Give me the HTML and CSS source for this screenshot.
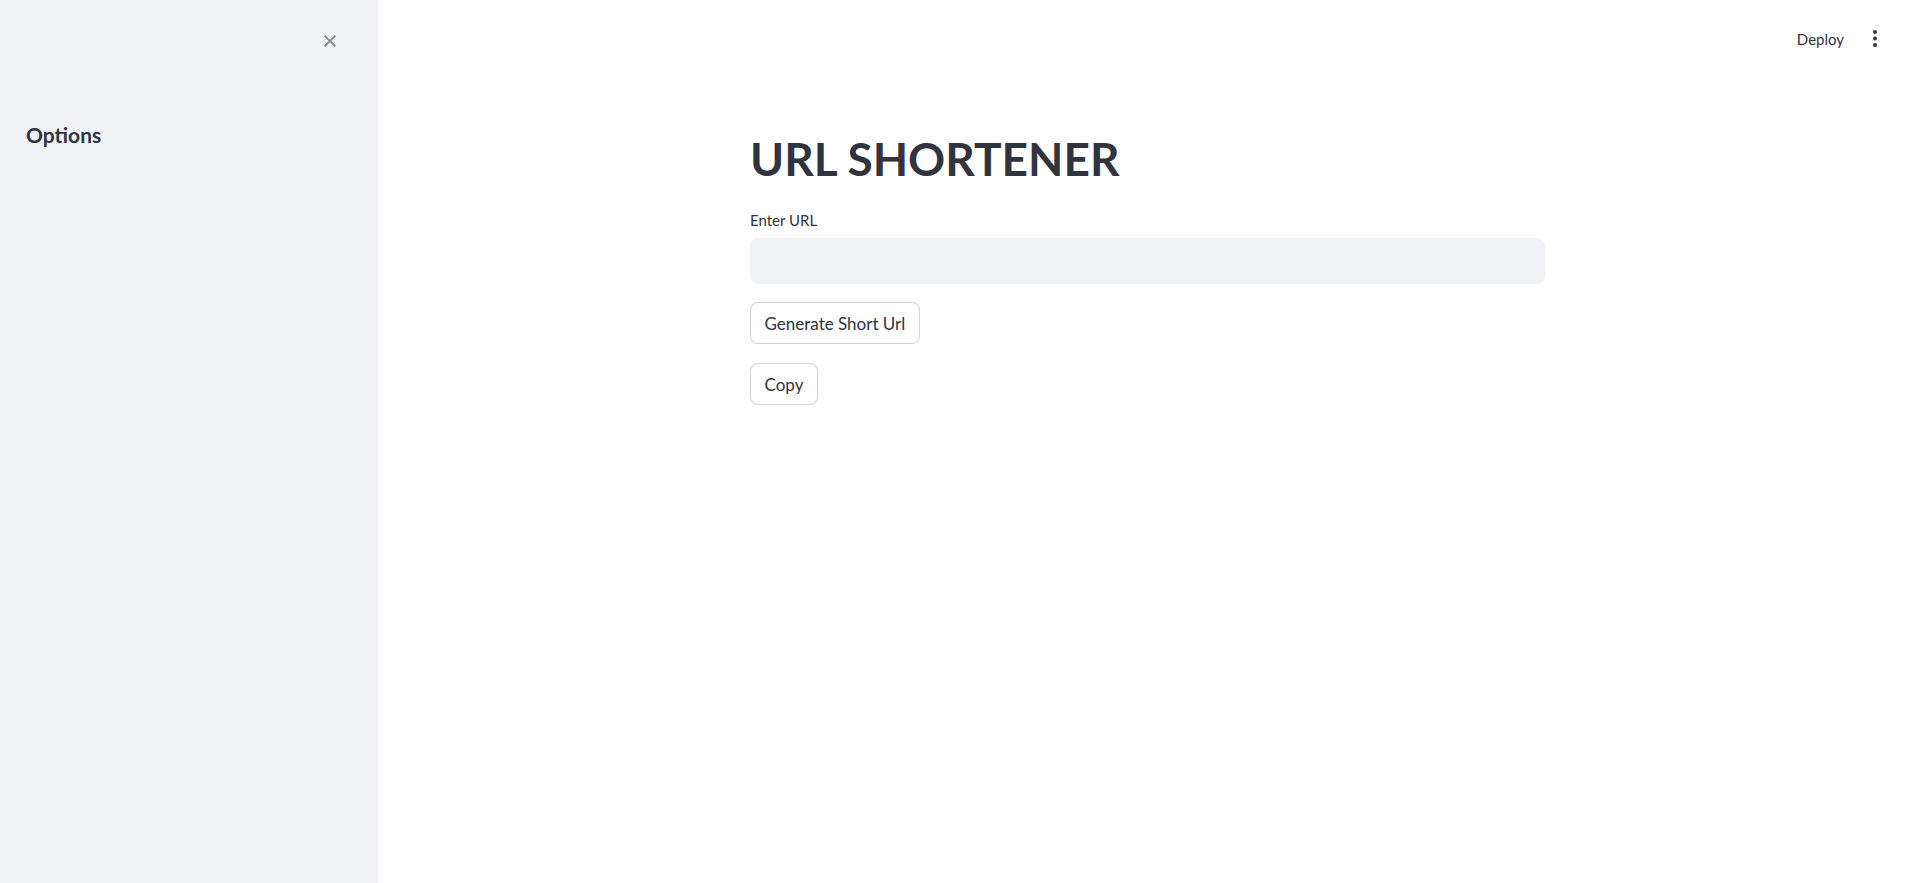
FILE: index.html
```html
<!DOCTYPE html>
<html lang="en">
<head>
<meta charset="utf-8">
<title>URL Shortener</title>
<link rel="stylesheet" href="styles.css">
</head>
<body>
<div class="app">
  <aside class="sidebar">
    <div class="sidebar-top">
      <button class="close-btn" aria-label="Close sidebar">
        <svg width="12" height="12" viewBox="0 0 12 12"><path d="M0.6 0.6 L11.4 11.4 M11.4 0.6 L0.6 11.4" stroke="currentColor" stroke-width="1.7" fill="none"/></svg>
      </button>
    </div>
    <h2 class="sidebar-title">Options</h2>
  </aside>
  <main class="main">
    <header class="topbar">
      <span class="deploy">Deploy</span>
      <span class="menu" aria-label="Main menu">
        <svg width="4" height="17" viewBox="0 0 4 17"><circle cx="2" cy="2" r="2" fill="#31333f"/><circle cx="2" cy="8.5" r="2" fill="#31333f"/><circle cx="2" cy="15" r="2" fill="#31333f"/></svg>
      </span>
    </header>
    <section class="content">
      <h1 class="title">URL SHORTENER</h1>
      <label class="label" for="url">Enter URL</label>
      <input class="text-input" id="url" type="text">
      <div class="buttons">
        <button class="btn">Generate Short Url</button>
        <button class="btn">Copy</button>
      </div>
    </section>
  </main>
</div>
</body>
</html>
```

FILE: styles.css
```css
* { box-sizing: border-box; }
html, body { margin: 0; padding: 0; height: 100%; }
body {
  font-family: "Lato", "Noto Sans", sans-serif;
  color: #31333f;
  background: #ffffff;
}
.app {
  display: flex;
  height: 100vh;
}
.sidebar {
  width: 378px;
  flex: none;
  background: #f0f2f6;
  padding: 35px 42px 0 26px;
}
.sidebar-top {
  display: flex;
  justify-content: flex-end;
  height: 12px;
}
.close-btn {
  border: none;
  background: none;
  padding: 0;
  width: 12px;
  height: 12px;
  color: #83858f;
  display: block;
}
.close-btn svg { display: block; }
.sidebar-title {
  margin: 76px 0 0 0;
  font-size: 21px;
  line-height: 24px;
  font-weight: 700;
}
.main {
  flex: 1;
  display: flex;
  flex-direction: column;
}
.topbar {
  height: 77px;
  display: flex;
  justify-content: flex-end;
  align-items: center;
  padding-right: 40px;
  gap: 29px;
}
.deploy {
  font-size: 15px;
  line-height: 20px;
}
.menu { display: flex; }
.menu svg { display: block; }
.content {
  width: 795px;
  margin: 0 auto;
  padding-top: 54px;
  display: flex;
  flex-direction: column;
  align-items: flex-start;
}
.title {
  margin: 0;
  font-size: 46px;
  line-height: 56px;
  font-weight: 700;
}
.label {
  margin-top: 23px;
  font-size: 15px;
  line-height: 20px;
}
.text-input {
  margin-top: 8px;
  width: 100%;
  height: 46px;
  border: none;
  border-radius: 8px;
  background: #f0f2f6;
  outline: none;
}
.buttons {
  margin-top: 18px;
  display: flex;
  flex-direction: column;
  align-items: flex-start;
  gap: 19px;
}
.btn {
  height: 42px;
  padding: 1px 13.5px 0;
  border: 1px solid rgba(49, 51, 63, 0.2);
  border-radius: 8px;
  background: #ffffff;
  color: #31333f;
  font-family: "Lato", "Noto Sans", sans-serif;
  font-size: 17px;
}
```
